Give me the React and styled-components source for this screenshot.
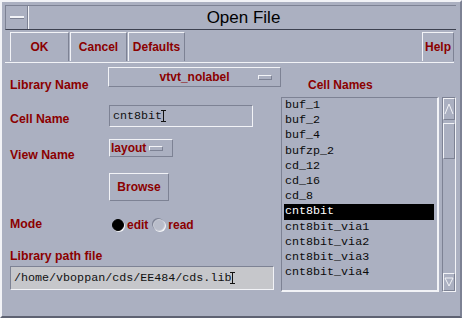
import React from "react";
import styled, { createGlobalStyle } from "styled-components";

const BG = "#abb0c1";
const RED = "#8b0000";
const HI = "#f2f3f7";
const SH = "#7d8294";

const Global = createGlobalStyle`
  html, body { margin: 0; padding: 0; background: ${BG}; }
  body { font-family: "Liberation Sans", Arial, sans-serif; }
`;

const Window = styled.div`
  width: 462px;
  height: 318px;
  box-sizing: border-box;
  background: ${BG};
  border-left: 2px solid ${HI};
  border-top: 2px solid ${HI};
  border-right: 2px solid ${SH};
  border-bottom: 2px solid #5e6272;
  padding: 3px 4px 4px 3px;
  display: flex;
  flex-direction: column;
  overflow: hidden;
`;

const TitleBar = styled.div`
  height: 23px;
  display: flex;
  border-top: 1px solid ${SH};
  border-bottom: 1px solid #3d4150;
  border-left: 1px solid ${SH};
`;

const MenuButton = styled.div`
  width: 22px;
  display: flex;
  align-items: center;
  justify-content: center;
  border-right: 1px solid ${HI};
  box-shadow: inset -1px 0 0 ${SH};
`;

const Dash = styled.div`
  width: 14px;
  height: 2px;
  background: ${HI};
  border-bottom: 1px solid ${SH};
`;

const Title = styled.div`
  flex: 1;
  display: flex;
  align-items: center;
  justify-content: center;
  font-size: 17px;
  color: #000;
  padding-left: 2px;
`;

const Toolbar = styled.div`
  display: flex;
  align-items: stretch;
  gap: 1px;
  padding: 2px 0 0 5px;
  height: 30px;
  border-bottom: 1px solid ${HI};
  margin-right: 2px;
`;

const ToolButton = styled.div`
  width: ${(p) => p.$w}px;
  box-sizing: border-box;
  display: flex;
  align-items: center;
  justify-content: center;
  color: ${RED};
  font-weight: bold;
  font-size: 12px;
  border-top: 1px solid ${HI};
  border-left: 1px solid ${HI};
  border-right: 1px solid ${SH};
  margin-left: ${(p) => (p.$push ? "auto" : "0")};
  margin-bottom: 1px;
`;

const Body = styled.div`
  flex: 1;
  display: flex;
  padding-left: 5px;
`;

const LeftCol = styled.div`
  width: 271px;
  display: flex;
  flex-direction: column;
`;

const Row = styled.div`
  height: ${(p) => p.$h}px;
  display: flex;
  align-items: flex-start;
`;

const Label = styled.div`
  width: ${(p) => p.$w || 99}px;
  margin-top: ${(p) => p.$top}px;
  font-weight: bold;
  font-size: 12.3px;
  line-height: 14px;
  color: ${RED};
  white-space: nowrap;
`;

const Dropdown = styled.div`
  margin-top: ${(p) => p.$top}px;
  width: ${(p) => p.$w}px;
  height: ${(p) => p.$h}px;
  box-sizing: border-box;
  display: flex;
  align-items: center;
  justify-content: ${(p) => (p.$center ? "center" : "flex-start")};
  position: relative;
  color: ${RED};
  font-weight: bold;
  font-size: 12px;
  border-top: 1px solid ${HI};
  border-left: 1px solid ${HI};
  border-right: 1px solid ${SH};
  border-bottom: 1px solid ${SH};
  padding-left: ${(p) => (p.$center ? 0 : 1)}px;
  gap: 3px;
`;

const Indicator = styled.span`
  display: inline-block;
  width: 14px;
  height: 5px;
  box-sizing: border-box;
  border-top: 1px solid ${HI};
  border-left: 1px solid ${HI};
  border-right: 1px solid ${SH};
  border-bottom: 1px solid ${SH};
  ${(p) => (p.$abs ? "position: absolute; right: 8px; top: 7px;" : "")}
`;

const TextField = styled.div`
  margin-top: ${(p) => p.$top}px;
  width: ${(p) => p.$w}px;
  height: ${(p) => p.$h}px;
  box-sizing: border-box;
  background: ${(p) => p.$bg || BG};
  border-top: 1px solid ${SH};
  border-left: 1px solid ${SH};
  border-right: 1px solid ${HI};
  border-bottom: 1px solid ${HI};
  display: flex;
  align-items: center;
  padding-left: 3px;
  font-family: "Liberation Mono", "Courier New", monospace;
  font-size: 11.7px;
  color: #111;
  white-space: nowrap;
`;

const Caret = styled.span`
  display: inline-block;
  width: 5px;
  height: 12px;
  margin-left: -1px;
  border-top: 1px solid #111;
  border-bottom: 1px solid #111;
  box-sizing: border-box;
  background: linear-gradient(#111, #111) center / 1px 100% no-repeat;
`;

const PushButton = styled.div`
  margin-top: ${(p) => p.$top}px;
  width: 60px;
  height: 28px;
  box-sizing: border-box;
  display: flex;
  align-items: center;
  justify-content: center;
  color: ${RED};
  font-weight: bold;
  font-size: 12px;
  border-top: 1px solid ${HI};
  border-left: 1px solid ${HI};
  border-right: 1px solid ${SH};
  border-bottom: 1px solid ${SH};
`;

const RadioGroup = styled.div`
  margin-top: ${(p) => p.$top}px;
  margin-left: 3px;
  display: flex;
  align-items: center;
  font-weight: bold;
  font-size: 12px;
  color: ${RED};
`;

const Radio = styled.span`
  display: inline-block;
  width: 12px;
  height: 12px;
  border-radius: 50%;
  box-sizing: border-box;
  background: ${(p) => (p.$on ? "#000" : "#b9bdca")};
  border: 1px solid ${(p) => (p.$on ? "#000" : "#c9ccd6")};
  box-shadow: ${(p) => (p.$on ? `1px 1px 0 ${HI}` : `1px 1px 0 ${HI}, -1px -1px 0 ${SH}`)};
  margin-right: 3px;
  margin-left: ${(p) => p.$ml || 0}px;
`;

const RightCol = styled.div`
  flex: 1;
  display: flex;
  flex-direction: column;
  padding-right: 3px;
`;

const ListHeader = styled.div`
  height: 34px;
  padding-left: 27px;
  padding-top: 15px;
  box-sizing: border-box;
  font-weight: bold;
  font-size: 12px;
  color: ${RED};
`;

const ListArea = styled.div`
  display: flex;
  height: 195px;
  gap: 3px;
`;

const ListBox = styled.div`
  width: 158px;
  box-sizing: border-box;
  border-top: 1px solid ${SH};
  border-left: 1px solid ${SH};
  border-right: 2px solid ${HI};
  border-bottom: 2px solid ${HI};
  padding: 0 3px 0 2px;
  overflow: hidden;
`;

const Item = styled.div`
  height: 15.2px;
  line-height: 15.2px;
  font-family: "Liberation Mono", "Courier New", monospace;
  font-size: 11.7px;
  padding-left: 1px;
  color: ${(p) => (p.$sel ? "#fff" : "#0a0a0a")};
  background: ${(p) => (p.$sel ? "#000" : "transparent")};
  white-space: nowrap;
`;

const ScrollBar = styled.div`
  width: 14px;
  box-sizing: border-box;
  border-top: 1px solid ${SH};
  border-left: 1px solid ${SH};
  border-right: 1px solid ${HI};
  border-bottom: 1px solid ${HI};
  display: flex;
  flex-direction: column;
`;

const Arrow = styled.div`
  height: ${(p) => p.$h}px;
  display: flex;
  align-items: center;
  justify-content: center;
  border-top: 1px solid ${HI};
  border-left: 1px solid ${HI};
  border-bottom: 1px solid ${SH};
  border-right: 1px solid ${SH};
`;

const Trough = styled.div`
  flex: 1;
  padding-top: 3px;
`;

const Thumb = styled.div`
  height: 34px;
  border-top: 1px solid ${HI};
  border-left: 1px solid ${HI};
  border-bottom: 1px solid ${SH};
  border-right: 1px solid ${SH};
`;

const items = [
  "buf_1",
  "buf_2",
  "buf_4",
  "bufzp_2",
  "cd_12",
  "cd_16",
  "cd_8",
  "cnt8bit",
  "cnt8bit_via1",
  "cnt8bit_via2",
  "cnt8bit_via3",
  "cnt8bit_via4",
];

export default function App() {
  return (
    <>
      <Global />
      <Window>
        <TitleBar>
          <MenuButton>
            <Dash />
          </MenuButton>
          <Title>Open File</Title>
        </TitleBar>
        <Toolbar>
          <ToolButton $w={59}>OK</ToolButton>
          <ToolButton $w={57}>Cancel</ToolButton>
          <ToolButton $w={57}>Defaults</ToolButton>
          <ToolButton $w={32} $push>Help</ToolButton>
        </Toolbar>
        <Body>
          <LeftCol>
            <Row $h={34}>
              <Label $top={15}>Library Name</Label>
              <Dropdown $top={4} $w={174} $h={20} $center>
                vtvt_nolabel
                <Indicator $abs />
              </Dropdown>
            </Row>
            <Row $h={34}>
              <Label $top={15}>Cell Name</Label>
              <TextField $top={8} $w={144} $h={22}>
                cnt8bit
                <Caret />
              </TextField>
            </Row>
            <Row $h={34}>
              <Label $top={17}>View Name</Label>
              <Dropdown $top={8} $w={64} $h={18}>
                layout
                <Indicator />
              </Dropdown>
            </Row>
            <Row $h={44}>
              <Label $top={0} />
              <PushButton $top={8}>Browse</PushButton>
            </Row>
            <Row $h={32}>
              <Label $top={8}>Mode</Label>
              <RadioGroup $top={9}>
                <Radio $on />
                edit
                <Radio $ml={5} />
                read
              </RadioGroup>
            </Row>
            <Row $h={21}>
              <Label $top={8} $w={200}>Library path file</Label>
            </Row>
            <Row $h={26}>
              <TextField $top={4} $w={264} $h={24} $bg="#c6c7cb">
                /home/vboppan/cds/EE484/cds.lib
                <Caret />
              </TextField>
            </Row>
          </LeftCol>
          <RightCol>
            <ListHeader>Cell Names</ListHeader>
            <ListArea>
              <ListBox>
                {items.map((it) => (
                  <Item key={it} $sel={it === "cnt8bit"}>
                    {it}
                  </Item>
                ))}
              </ListBox>
              <ScrollBar>
                <Arrow $h={20}>
                  <svg width="10" height="12" viewBox="0 0 10 12">
                    <path d="M1 11 L5 1 L9 11" fill="none" stroke={HI} strokeWidth="1" />
                  </svg>
                </Arrow>
                <Trough>
                  <Thumb />
                </Trough>
                <Arrow $h={16}>
                  <svg width="10" height="10" viewBox="0 0 10 10">
                    <path d="M1 1 L5 9 L9 1 Z" fill="none" stroke={HI} strokeWidth="1" />
                  </svg>
                </Arrow>
              </ScrollBar>
            </ListArea>
          </RightCol>
        </Body>
      </Window>
    </>
  );
}
